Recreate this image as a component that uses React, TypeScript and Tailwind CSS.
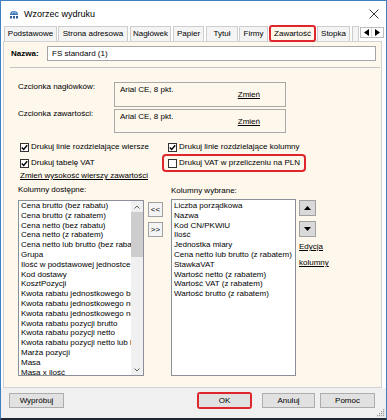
const leftItems = [
  "Cena brutto (bez rabatu)",
  "Cena brutto (z rabatem)",
  "Cena netto (bez rabatu)",
  "Cena netto (z rabatem)",
  "Cena netto lub brutto (bez rabatu)",
  "Grupa",
  "Ilość w podstawowej jednostce",
  "Kod dostawy",
  "KosztPozycji",
  "Kwota rabatu jednostkowego brutto",
  "Kwota rabatu jednostkowego netto",
  "Kwota rabatu jednostkowego netto lub brutto",
  "Kwota rabatu pozycji brutto",
  "Kwota rabatu pozycji netto",
  "Kwota rabatu pozycji netto lub brutto",
  "Marża pozycji",
  "Masa",
  "Masa x ilość",
];

const rightItems = [
  "Liczba porządkowa",
  "Nazwa",
  "Kod CN/PKWiU",
  "Ilość",
  "Jednostka miary",
  "Cena netto lub brutto (z rabatem)",
  "StawkaVAT",
  "Wartość netto (z rabatem)",
  "Wartość VAT (z rabatem)",
  "Wartość brutto (z rabatem)",
];

const tabs = [
  { label: "Podstawowe", cls: "w-[53px]" },
  { label: "Strona adresowa", cls: "ml-[1px] w-[70px]" },
  { label: "Nagłówek", cls: "ml-[2px] w-[41px]" },
  { label: "Papier", cls: "ml-[2px] w-[31px]" },
  { label: "Tytuł", cls: "ml-[2px] w-[32px]" },
  { label: "Firmy", cls: "ml-[1px] w-[29px]" },
];

function Check({ checked }: { checked?: boolean }) {
  return (
    <span className="w-[9px] h-[9px] border border-[#333] bg-white flex items-center justify-center shrink-0">
      {checked && (
        <svg width="7" height="7" viewBox="0 0 7 7">
          <path d="M0.8 3.4 L2.7 5.4 L6.2 1.2" fill="none" stroke="#000" strokeWidth="1.4" />
        </svg>
      )}
    </span>
  );
}

function Tab({ label, className }: { label: string; className: string }) {
  return (
    <div
      className={`h-[15px] border border-b-0 border-[#cdcdcd] bg-[#f4f4f4] flex items-center justify-center ${className}`}
    >
      {label}
    </div>
  );
}

function FontBox({ label, tall }: { label: string; tall?: boolean }) {
  return (
    <div className="flex ml-[14px]">
      <div className="w-[96px]">{label}</div>
      <div
        className={`w-[172px] border border-[#a9a9a9] flex items-start justify-between pl-[5px] pr-[25px] pt-[2px] ${
          tall ? "h-[25px]" : "h-[24px]"
        }`}
      >
        <span>Arial CE, 8 pkt.</span>
        <span className="mt-[5px] underline">Zmień</span>
      </div>
    </div>
  );
}

function BtnBox({ children, className }: { children: React.ReactNode; className?: string }) {
  return (
    <div
      className={`h-[15px] border border-[#adadad] bg-[#e1e1e1] flex items-center justify-center ${className ?? ""}`}
    >
      {children}
    </div>
  );
}

export default function App() {
  return (
    <div className="relative w-[387px] h-[420px] flex flex-col bg-white border-x border-t border-[#3f7fbf] border-b-2 border-b-[#1e2633] font-['Liberation_Sans',Arial,sans-serif] text-[8px] leading-[10px] text-black overflow-hidden">
      {/* title bar */}
      <div className="h-[25px] flex items-center pl-[8px] shrink-0">
        <svg width="10" height="10" viewBox="0 0 10 10">
          <path d="M1 6 A4 4 0 0 1 9 6 Z" fill="#3a78b8" />
          <path d="M3 5 A2 2 0 0 1 7 5" fill="none" stroke="#bcd6ee" strokeWidth="0.8" />
          <rect x="1" y="7" width="2" height="2.5" fill="#2d5f94" />
          <rect x="4" y="7" width="2" height="2.5" fill="#2d5f94" />
          <rect x="7" y="7" width="2" height="2.5" fill="#2d5f94" />
        </svg>
        <span className="ml-[5px] text-[9px]">Wzorzec wydruku</span>
        <svg className="ml-auto mr-[7px]" width="10" height="10" viewBox="0 0 10 10">
          <path d="M0.5 0.5 L9.5 9.5 M9.5 0.5 L0.5 9.5" stroke="#222" strokeWidth="0.9" />
        </svg>
      </div>

      {/* tab strip */}
      <div className="h-[15px] flex items-end pl-[3px] shrink-0">
        {tabs.map((t) => (
          <Tab key={t.label} label={t.label} className={t.cls} />
        ))}
        <div className="relative z-10 ml-[1px] w-[47px] h-[17px] -mb-[1px] border-2 border-[#e0262d] rounded-[3px] bg-[#fdf7ec] flex items-center justify-center">
          Zawartość
        </div>
        <Tab label="Stopka" className="ml-[1px] w-[33px]" />
        <Tab label="" className="ml-[2px] w-[7px]" />
        <div className="ml-[1px] mb-[3px] h-[11px] flex border border-[#bdbdbd] bg-white">
          <div className="w-[11px] flex items-center justify-center border-r border-[#d5d5d5]">
            <svg width="5" height="7" viewBox="0 0 5 7">
              <path d="M5 0 L0 3.5 L5 7 Z" fill="#000" />
            </svg>
          </div>
          <div className="w-[11px] flex items-center justify-center">
            <svg width="5" height="7" viewBox="0 0 5 7">
              <path d="M0 0 L5 3.5 L0 7 Z" fill="#000" />
            </svg>
          </div>
        </div>
      </div>

      {/* tab page */}
      <div className="ml-[2px] w-[379px] h-[347px] shrink-0 border border-[#d2d2d2] bg-[#fdf7ec] flex flex-col">
        <div className="mt-[4px] h-[15px] flex items-center pl-[7px]">
          <span className="w-[36px] font-bold">Nazwa:</span>
          <div className="w-[329px] h-[15px] border border-[#a5a5a5] bg-white flex items-center pl-[4px]">
            FS standard (1)
          </div>
        </div>

        <div className="mt-[6px] ml-[6px] mr-[1px] h-px bg-[#c4c4c4]" />

        <div className="mt-[14px]">
          <FontBox label="Czcionka nagłówków:" tall />
        </div>
        <div className="mt-[2px]">
          <FontBox label="Czcionka zawartości:" />
        </div>

        <div className="mt-[8px] h-[12px] flex items-center ml-[16px]">
          <div className="w-[148px] flex items-center gap-[2px]">
            <Check checked />
            <span>Drukuj linie rozdzielające wiersze</span>
          </div>
          <div className="flex items-center gap-[2px]">
            <Check checked />
            <span>Drukuj linie rozdzielające kolumny</span>
          </div>
        </div>
        <div className="mt-[4px] h-[12px] flex items-center ml-[16px]">
          <div className="w-[148px] flex items-center gap-[2px]">
            <Check checked />
            <span>Drukuj tabelę VAT</span>
          </div>
          <div className="-ml-[6px] -my-[3px] h-[18px] flex items-center gap-[2px] border-2 border-[#e0262d] rounded-[4px] pl-[4px] pr-[4px]">
            <Check />
            <span>Drukuj VAT w przeliczeniu na PLN</span>
          </div>
        </div>

        <div className="mt-[2px] ml-[16px] underline">Zmień wysokość wierszy zawartości</div>

        <div className="mt-[4px] ml-[14px] flex items-start">
          {/* available columns */}
          <div className="w-[126px] flex flex-col">
            <div>Kolumny dostępne:</div>
            <div className="mt-[5px] h-[176px] border border-[#8a8f98] bg-white flex overflow-hidden">
              <div className="flex-1 min-w-0 pl-[2px] leading-[9.8px] overflow-hidden">
                {leftItems.map((it) => (
                  <div key={it} className="whitespace-nowrap">
                    {it}
                  </div>
                ))}
              </div>
              <div className="w-[12px] shrink-0 bg-[#f0f0f0] flex flex-col">
                <div className="h-[11px] flex items-center justify-center">
                  <svg width="6" height="4" viewBox="0 0 6 4">
                    <path d="M0.5 3.5 L3 1 L5.5 3.5" fill="none" stroke="#606060" strokeWidth="1" />
                  </svg>
                </div>
                <div className="h-[45px] bg-[#cdcdcd]" />
                <div className="flex-1" />
                <div className="h-[11px] flex items-center justify-center">
                  <svg width="6" height="4" viewBox="0 0 6 4">
                    <path d="M0.5 0.5 L3 3 L5.5 0.5" fill="none" stroke="#606060" strokeWidth="1" />
                  </svg>
                </div>
              </div>
            </div>
          </div>

          {/* move buttons */}
          <div className="ml-[4px] mt-[17px] flex flex-col gap-[5px]">
            <div className="w-[15px] h-[15px] border border-[#a0a0a0] bg-[#f4f4f4] flex items-center justify-center">
              &lt;&lt;
            </div>
            <div className="w-[15px] h-[15px] border border-[#a0a0a0] bg-[#f4f4f4] flex items-center justify-center">
              &gt;&gt;
            </div>
          </div>

          {/* selected columns */}
          <div className="ml-[8px] w-[125px] flex flex-col">
            <div className="mt-[1px]">Kolumny wybrane:</div>
            <div className="mt-[3px] h-[177px] border border-[#8a8f98] bg-white pt-[1px] pl-[2px] leading-[9.8px] overflow-hidden">
              {rightItems.map((it) => (
                <div key={it} className="whitespace-nowrap">
                  {it}
                </div>
              ))}
            </div>
          </div>

          {/* order buttons */}
          <div className="ml-[3px] mt-[15px] flex flex-col">
            <div className="w-[17px] h-[16px] border border-[#a0a0a0] bg-[#d9d9d9] flex items-center justify-center">
              <svg width="7" height="4" viewBox="0 0 7 4">
                <path d="M0 4 L3.5 0 L7 4 Z" fill="#000" />
              </svg>
            </div>
            <div className="mt-[5px] w-[17px] h-[16px] border border-[#a0a0a0] bg-[#d9d9d9] flex items-center justify-center">
              <svg width="7" height="4" viewBox="0 0 7 4">
                <path d="M0 0 L3.5 4 L7 0 Z" fill="#000" />
              </svg>
            </div>
            <div className="mt-[2px] leading-[16px] underline">
              <div>Edycja</div>
              <div>kolumny</div>
            </div>
          </div>
        </div>
      </div>

      {/* bottom buttons */}
      <div className="flex-1 bg-[#f0f0f0] flex items-start pt-[5px] pl-[8px]">
        <BtnBox className="w-[55px]">Wypróbuj</BtnBox>
        <div className="ml-[133px] -mt-[1px] border-2 border-[#e0262d] rounded-[3px]">
          <div className="w-[51px] h-[13px] bg-[#e1e1e1] flex items-center justify-center">OK</div>
        </div>
        <BtnBox className="ml-[10px] w-[53px]">Anuluj</BtnBox>
        <BtnBox className="ml-[5px] w-[55px]">Pomoc</BtnBox>
      </div>

      <svg className="absolute right-[1px] bottom-[1px]" width="8" height="8" viewBox="0 0 8 8">
        <g fill="#9a9a9a">
          <rect x="6" y="0" width="1.2" height="1.2" />
          <rect x="4" y="2" width="1.2" height="1.2" />
          <rect x="6" y="2" width="1.2" height="1.2" />
          <rect x="2" y="4" width="1.2" height="1.2" />
          <rect x="4" y="4" width="1.2" height="1.2" />
          <rect x="6" y="4" width="1.2" height="1.2" />
          <rect x="0" y="6" width="1.2" height="1.2" />
          <rect x="2" y="6" width="1.2" height="1.2" />
          <rect x="4" y="6" width="1.2" height="1.2" />
          <rect x="6" y="6" width="1.2" height="1.2" />
        </g>
      </svg>
    </div>
  );
}
